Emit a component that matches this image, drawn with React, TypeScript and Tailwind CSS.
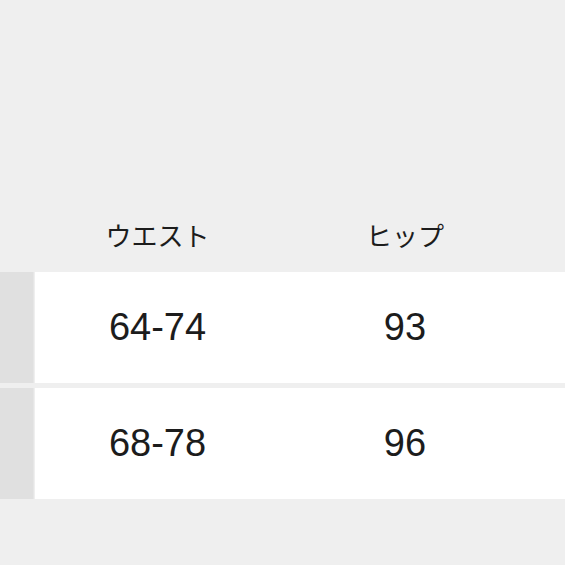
const rows = [
  { waist: "64-74", hip: "93" },
  { waist: "68-78", hip: "96" },
];

export default function App() {
  return (
    <div
      className="w-[565px] h-[565px] overflow-hidden bg-[#efefef] text-[#1c1c1c]"
      style={{ fontFamily: '"Liberation Sans", "Noto Sans CJK JP", sans-serif' }}
    >
      <div className="h-[200px]" />

      {/* header */}
      <div className="flex h-[72px] items-center pt-[2px]">
        <div className="w-[35px] shrink-0" />
        <div className="w-[245px] shrink-0 text-center text-[26px]">ウエスト</div>
        <div className="w-[250px] shrink-0 text-center text-[26px]">ヒップ</div>
      </div>

      {/* body */}
      <div className="flex flex-col gap-[5px]">
        {rows.map((r) => (
          <div key={r.waist} className="flex h-[111px]">
            <div className="w-[34px] shrink-0 bg-[#e0e0e0] border-r border-[#e6e6e6]" />
            <div className="flex flex-1 items-center bg-white ml-[1px]">
              <div className="w-[245px] shrink-0 text-center text-[38px]">{r.waist}</div>
              <div className="w-[250px] shrink-0 text-center text-[38px]">{r.hip}</div>
            </div>
          </div>
        ))}
      </div>
    </div>
  );
}
